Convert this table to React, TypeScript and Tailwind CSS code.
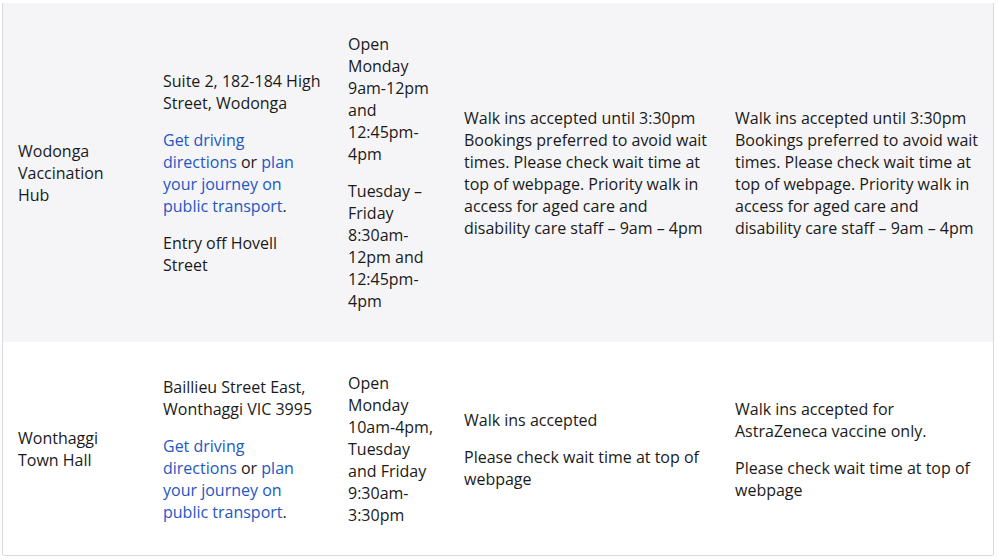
import React from "react";

const Link = ({ children }: { children: React.ReactNode }) => (
  <a href="#" className="text-[#2357c4]">
    {children}
  </a>
);

const Lines = ({ lines }: { lines: React.ReactNode[] }) => (
  <p>
    {lines.map((l, i) => (
      <React.Fragment key={i}>
        {i > 0 && <br />}
        <span className="whitespace-nowrap">{l}</span>
      </React.Fragment>
    ))}
  </p>
);

const Cell = ({ children }: { children: React.ReactNode }) => (
  <div className="flex flex-col justify-center gap-[15px] px-[15px]">{children}</div>
);

export default function App() {
  return (
    <div
      className="w-[999px] h-[560px] bg-white pt-[3px] pl-[2px] text-[#1a1a1a] text-[16px] leading-[22px]"
      style={{ fontFamily: '"Open Sans", "Liberation Sans", sans-serif' }}
    >
      <div className="w-[992px] border-x border-b border-[#d9d9e2] rounded-b-[3px] overflow-hidden">
        <div className="grid grid-cols-[145px_185px_116px_271px_273px] bg-[#f5f5f7] pt-[30px] pb-[30px]">
          <Cell>
            <Lines lines={["Wodonga", "Vaccination", "Hub"]} />
          </Cell>
          <Cell>
            <Lines lines={["Suite 2, 182-184 High", "Street, Wodonga"]} />
            <Lines
              lines={[
                <Link>Get driving</Link>,
                <>
                  <Link>directions</Link> or <Link>plan</Link>
                </>,
                <Link>your journey on</Link>,
                <>
                  <Link>public transport</Link>.
                </>,
              ]}
            />
            <Lines lines={["Entry off Hovell", "Street"]} />
          </Cell>
          <Cell>
            <Lines lines={["Open", "Monday", "9am-12pm", "and", "12:45pm-", "4pm"]} />
            <Lines lines={["Tuesday \u2013", "Friday", "8:30am-", "12pm and", "12:45pm-", "4pm"]} />
          </Cell>
          <Cell>
            <Lines
              lines={[
                "Walk ins accepted until 3:30pm",
                "Bookings preferred to avoid wait",
                "times. Please check wait time at",
                "top of webpage. Priority walk in",
                "access for aged care and",
                "disability care staff \u2013 9am \u2013 4pm",
              ]}
            />
          </Cell>
          <Cell>
            <Lines
              lines={[
                "Walk ins accepted until 3:30pm",
                "Bookings preferred to avoid wait",
                "times. Please check wait time at",
                "top of webpage. Priority walk in",
                "access for aged care and",
                "disability care staff \u2013 9am \u2013 4pm",
              ]}
            />
          </Cell>
        </div>
        <div className="grid grid-cols-[145px_185px_116px_271px_273px] bg-white pt-[30px] pb-[29px]">
          <Cell>
            <Lines lines={["Wonthaggi", "Town Hall"]} />
          </Cell>
          <Cell>
            <Lines lines={["Baillieu Street East,", "Wonthaggi VIC 3995"]} />
            <Lines
              lines={[
                <Link>Get driving</Link>,
                <>
                  <Link>directions</Link> or <Link>plan</Link>
                </>,
                <Link>your journey on</Link>,
                <>
                  <Link>public transport</Link>.
                </>,
              ]}
            />
          </Cell>
          <Cell>
            <Lines lines={["Open", "Monday", "10am-4pm,", "Tuesday", "and Friday", "9:30am-", "3:30pm"]} />
          </Cell>
          <Cell>
            <Lines lines={["Walk ins accepted"]} />
            <Lines lines={["Please check wait time at top of", "webpage"]} />
          </Cell>
          <Cell>
            <Lines lines={["Walk ins accepted for", "AstraZeneca vaccine only."]} />
            <Lines lines={["Please check wait time at top of", "webpage"]} />
          </Cell>
        </div>
      </div>
    </div>
  );
}
